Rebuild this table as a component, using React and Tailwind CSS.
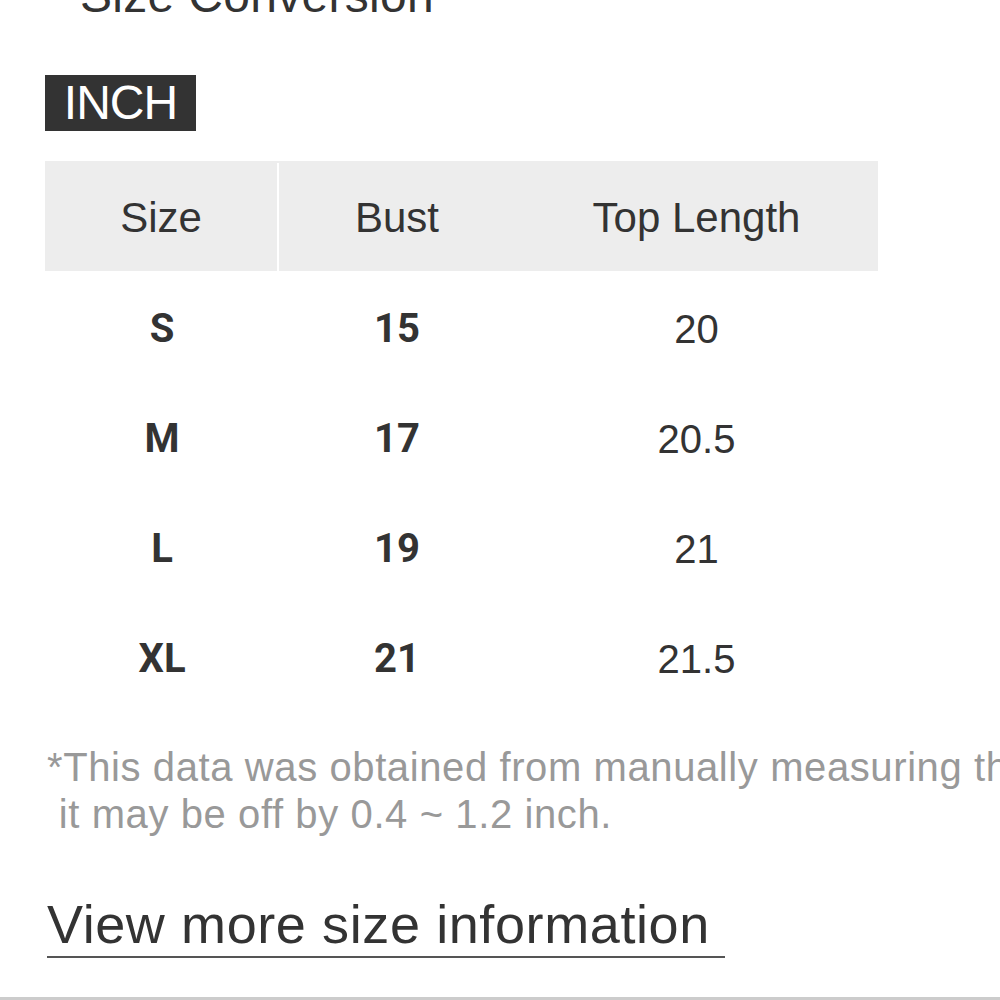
export default function App() {
  const rows = [
    ["S", "15", "20"],
    ["M", "17", "20.5"],
    ["L", "19", "21"],
    ["XL", "21", "21.5"],
  ];
  return (
    <div className="w-[1000px] h-[1000px] overflow-hidden bg-white relative" style={{ fontFamily: '"Liberation Sans", Arial, sans-serif' }}>
      <div className="pl-[80px] mt-[-28px] text-[48px] leading-[47px] text-[#333] whitespace-nowrap tracking-[0.3px]">Size Conversion</div>
      <div className="pl-[45px] mt-[56px]">
        <div className="inline-flex items-center justify-center w-[151px] h-[56px] bg-[#333] text-white text-[48px] leading-[56px] tracking-[-1px]">INCH</div>
      </div>
      <div className="ml-[45px] mt-[30px] w-[833px] text-[#333]">
        <div className="flex h-[110px] bg-[#ededed] text-[42px] items-center pt-[2px]">
          <div className="w-[234px] h-full flex items-center justify-center border-r-2 border-white">Size</div>
          <div className="w-[236px] flex items-center justify-center">Bust</div>
          <div className="flex-1 flex items-center justify-center">Top Length</div>
        </div>
        {rows.map((r) => (
          <div key={r[0]} className="flex h-[110px] items-center text-[40px] pt-[6px]">
            <div className="w-[234px] text-center font-bold" style={{ fontFamily: 'Roboto, sans-serif' }}>{r[0]}</div>
            <div className="w-[236px] text-center font-bold" style={{ fontFamily: 'Roboto, sans-serif' }}>{r[1]}</div>
            <div className="flex-1 text-center">{r[2]}</div>
          </div>
        ))}
      </div>
      <div className="pl-[47px] mt-[33px] text-[40px] leading-[47px] text-[#999] whitespace-pre tracking-[0.6px]">
        {"*This data was obtained from manually measuring the product,\n it may be off by 0.4 ~ 1.2 inch."}
      </div>
      <div className="pl-[47px] mt-[59px]">
        <span className="inline-block text-[54px] leading-[54px] text-[#333] pr-[15px] pb-[5px] border-b-2 border-[#555] tracking-[0.6px]">View more size information</span>
      </div>
      <div className="absolute left-0 right-0 top-[997px] h-[3px] bg-[#ccc]"></div>
    </div>
  );
}
